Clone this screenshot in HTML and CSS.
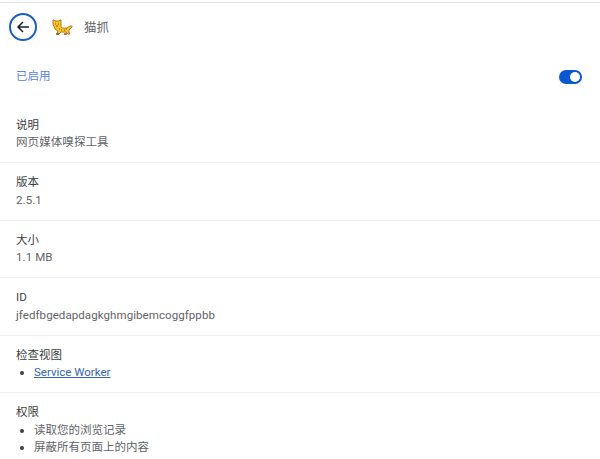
FILE: index.html
```html
<!DOCTYPE html>
<html lang="zh">
<head>
<meta charset="utf-8">
<title>猫抓</title>
<link rel="stylesheet" href="styles.css">
</head>
<body>
<div class="page">
  <header class="head">
    <button class="back" aria-label="返回">
      <svg width="16" height="16" viewBox="0 0 16 16"><path d="M14 8H3M8 3L3 8l5 5" fill="none" stroke="#202124" stroke-width="1.5"/></svg>
    </button>
    <svg class="logo" width="22" height="19" viewBox="0 0 22 19">
      <path d="M2 2h1l1 1h4l1-1h1v7l1 1h5l3-2h2v1l-3 3v2l1 2h-2l-2-2h-5l-2 2H6l1-3-3-2-1-3-1-1z" fill="#f6c71c" stroke="#b9772a" stroke-width="1" stroke-linejoin="round"/>
      <path d="M4 6h1M7 6h1M5 8h2M10 12h1M13 12h1M15 11h1M8 11h1" stroke="#8a5a1a" stroke-width="1"/>
      <path d="M5 16h3M13 16h3" stroke="#8a4f20" stroke-width="1.5"/>
    </svg>
    <span class="name">猫抓</span>
  </header>
  <div class="enabled">
    <span class="enabled-label">已启用</span>
    <span class="toggle"><span class="knob"></span></span>
  </div>
  <section class="row">
    <div class="label">说明</div>
    <div class="value">网页媒体嗅探工具</div>
  </section>
  <section class="row">
    <div class="label">版本</div>
    <div class="value">2.5.1</div>
  </section>
  <section class="row">
    <div class="label">大小</div>
    <div class="value">1.1 MB</div>
  </section>
  <section class="row">
    <div class="label">ID</div>
    <div class="value">jfedfbgedapdagkghmgibemcoggfppbb</div>
  </section>
  <section class="row">
    <div class="label">检查视图</div>
    <ul class="list"><li><a href="#">Service Worker</a></li></ul>
  </section>
  <section class="row">
    <div class="label">权限</div>
    <ul class="list"><li>读取您的浏览记录</li><li>屏蔽所有页面上的内容</li></ul>
  </section>
</div>
</body>
</html>
```
FILE: styles.css
```css
html, body {
  margin: 0;
  height: 100%;
  overflow: hidden;
  background: #fff;
}
.page {
  font-family: "Roboto", "Noto Sans CJK SC", sans-serif;
  font-size: 11.5px;
  line-height: 17.5px;
  color: #5f6368;
  padding-top: 2px;
}
.head {
  display: flex;
  align-items: center;
  height: 48px;
  padding-left: 9px;
  border-top: 1px solid #e3e4e6;
}
.back {
  width: 28px;
  height: 28px;
  padding: 0;
  border: 2px solid #1a5fc0;
  border-radius: 50%;
  background: #fff;
  display: flex;
  align-items: center;
  justify-content: center;
}
.logo { margin-left: 14px; }
.name { margin: 2px 0 0 11px; font-size: 12.5px; }
.enabled {
  display: flex;
  align-items: center;
  justify-content: space-between;
  height: 51px;
  margin-bottom: 3.5px;
  padding: 0 18px 0 16px;
}
.enabled-label { color: #5b86d6; }
.toggle {
  position: relative;
  width: 23px;
  height: 14px;
  border-radius: 7px;
  background: #0b57d0;
}
.knob {
  position: absolute;
  top: 2px;
  right: 2px;
  width: 10px;
  height: 10px;
  border-radius: 50%;
  background: #fff;
}
.row {
  box-sizing: border-box;
  height: 57.5px;
  padding: 11px 16px 0;
  border-bottom: 1px solid #efeff1;
}
.row:last-child { border-bottom: 0; }
.label { color: #3c4043; }
.value { letter-spacing: 0.08px; }
.list {
  margin: 0;
  padding: 0 0 0 18px;
  list-style: none;
}
.list li { position: relative; }
.list li::before {
  content: "";
  position: absolute;
  left: -14px;
  top: 7px;
  width: 4px;
  height: 4px;
  border-radius: 50%;
  background: #3c4043;
}
.list a { color: #3367b5; }
```
